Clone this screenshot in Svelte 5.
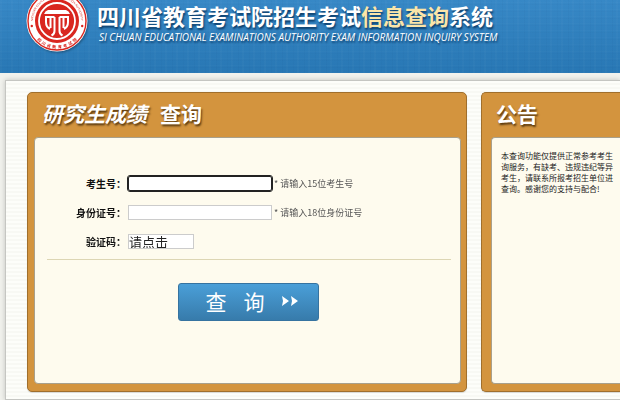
<script>
  let candidate = $state('');
  let idNumber = $state('');
  let captcha = $state('请点击');
  let first;
  $effect(() => first.focus());
</script>

<header>
  <svg class="logo" viewBox="0 0 64 64" role="img" aria-label="四川省教育考试院">
    <defs>
      <path id="arc-low" d="M4.500 32a27.500 27.500 0 0 0 55 0" />
      <path id="arc-top" d="M8 32a24 24 0 0 1 48 0" />
    </defs>
    <circle cx="32" cy="32" r="30.500" fill="#fff" />
    <circle cx="32" cy="32" r="29" fill="none" stroke="#d9261f" stroke-width="1.400" />
    <text class="seal-cn"><textPath href="#arc-low" startOffset="50%" text-anchor="middle">四&#160; 川&#160; 省&#160; 教&#160; 育&#160; 考&#160; 试&#160; 院</textPath></text>
    <text class="seal-en"><textPath href="#arc-top" startOffset="50%" text-anchor="middle">SICHUAN EDUCATIONAL EXAMINATION AUTHORITY</textPath></text>
    <circle cx="6.800" cy="37" r="1.200" fill="#d9261f" />
    <circle cx="57.200" cy="37" r="1.200" fill="#d9261f" />
    <circle cx="32" cy="32" r="22" fill="#d9261f" />
    <circle cx="32" cy="32" r="18" fill="none" stroke="#fff" stroke-width="1.800" />
    <path d="M23 21h18q3 1 4 4H19q1-3 4-4z" fill="#fff" />
    <path d="M20 28h9.500M34.500 28h9.500M21 28v5q0 5 4 7M25.500 28v11M29.500 28v14q0 3-3 4.500M34.500 28v14q0 3 3 4.500M38.500 28v11M43 28v5q0 5-4 7" fill="none" stroke="#fff" stroke-width="2" />
  </svg>
  <div class="brand">
    <h1>四川省教育考试院招生考试<em>信息查询</em>系统</h1>
    <p>SI CHUAN EDUCATIONAL EXAMINATIONS AUTHORITY EXAM INFORMATION INQUIRY SYSTEM</p>
  </div>
</header>

<main>
  <section class="panel query">
    <h2><i>研究生成绩</i><span>查询</span></h2>
    <form class="body" onsubmit={(e) => e.preventDefault()}>
      <div class="row">
        <label for="candidate">考生号：</label>
        <input id="candidate" bind:this={first} bind:value={candidate} />
        <small>* 请输入15位考生号</small>
      </div>
      <div class="row">
        <label for="idnum">身份证号：</label>
        <input id="idnum" bind:value={idNumber} />
        <small>* 请输入18位身份证号</small>
      </div>
      <div class="row">
        <label for="captcha">验证码：</label>
        <input id="captcha" class="short" bind:value={captcha} />
      </div>
      <hr />
      <button type="submit">
        <span>查</span><span>询</span>
        <svg viewBox="0 0 16 10" aria-hidden="true"><path d="M0 0l7 5-7 5 1-5zM9 0l7 5-7 5 1-5z" fill="#fff" /></svg>
      </button>
    </form>
  </section>
  <section class="panel notice">
    <h2>公告</h2>
    <div class="body">
      <p>本查询功能仅提供正常参考考生<br />询服务，有缺考、违规违纪等异<br />考生，请联系所报考招生单位进<br />查询。感谢您的支持与配合!</p>
    </div>
  </section>
</main>

<style>
  :global(body) {
    overflow: hidden;
    background: #f1f2ed;
    font-family: "Noto Sans", "Noto Sans CJK SC", sans-serif;
  }
  :global(*) { box-sizing: border-box; }
  h1, h2, p { margin: 0; }
  header {
    display: flex;
    align-items: flex-start;
    gap: 8px;
    height: 73px;
    padding-left: 25px;
    overflow: hidden;
    background:
      repeating-linear-gradient(90deg, #ffffff05 0 2px, transparent 2px 7px, #00205006 7px 8px, transparent 8px 11px),
      repeating-linear-gradient(0deg, #ffffff04 0 1px, transparent 1px 5px, #00205005 5px 6px, transparent 6px 7px),
      linear-gradient(#3788c6, #2877b4);
  }
  .logo {
    flex: none;
    width: 64px;
    height: 64px;
    margin-top: -11px;
    filter: drop-shadow(1px 1px 1px #0005);
  }
  .seal-cn { font: bold 4px "Noto Sans CJK SC", sans-serif; fill: #d9261f; }
  .seal-en { font: 3px "Liberation Sans", sans-serif; fill: #d9261f; }
  .brand { color: #fff; text-shadow: 1px 2px 2px #0b3d6a; white-space: nowrap; }
  h1 { font: bold 22px/30px "Noto Sans CJK SC", sans-serif; }
  h1 em { font-style: normal; color: #fbe5a9; }
  .brand p { padding-left: 2px; font: italic 10px/14px "Open Sans", "Noto Sans", sans-serif; }
  main {
    display: flex;
    gap: 14px;
    margin: 7px 0 0 5px;
    padding: 11px 0 7px 21px;
    border: 1px solid #c5c6c2;
    border-right: 0;
    background: repeating-linear-gradient(#fdfefa 0 2px, #f8f9f4 2px 4px);
    box-shadow: 0 0 5px #0003;
  }
  .panel {
    display: flex;
    flex-direction: column;
    border: 1px solid #a06f2c;
    border-radius: 5px;
    background: #d3943e;
    box-shadow: 0 1px 1px #0002;
  }
  .query { flex: none; width: 440px; padding: 0 5px 7px 6px; }
  .notice {
    flex: 1;
    min-width: 0;
    padding: 0 0 7px 9px;
    border-right: 0;
    border-radius: 5px 0 0 5px;
  }
  h2 {
    padding: 0 0 3px 8px;
    color: #fff;
    font: bold 21px/41px "Noto Sans CJK SC", sans-serif;
    text-shadow: 1px 2px 2px #5a3a10;
  }
  .notice h2 { padding-left: 5px; }
  h2 span { margin-left: 13px; }
  .body {
    flex: 1;
    min-height: 247px;
    border: 1px solid #a8a08c;
    border-radius: 4px;
    background: #fefbee;
  }
  .notice .body { border-right: 0; border-radius: 4px 0 0 4px; }
  form { padding: 38px 9px 0 12px; }
  .row { display: flex; align-items: center; height: 15px; margin-bottom: 14px; }
  label {
    width: 81px;
    padding-right: 2px;
    text-align: right;
    font: bold 10px/15px "Noto Sans CJK SC", sans-serif;
    color: #111;
  }
  input {
    width: 144px;
    height: 15px;
    padding: 0;
    border: 1px solid #ccc;
    border-radius: 0;
    background: #fff;
    color: #222;
    font: 13px/13px "Noto Sans CJK SC", sans-serif;
  }
  input:focus { outline: 1px solid #222; border-color: #222; border-radius: 2px; outline-offset: 0; }
  input.short { width: 66px; }
  small { padding-left: 2px; font: 9px/15px "Noto Sans CJK SC", sans-serif; color: #555; }
  hr { margin: -4px 0 0; border: 0; border-top: 1px solid #ddd6b4; }
  button {
    display: flex;
    align-items: center;
    justify-content: center;
    gap: 17px;
    width: 141px;
    height: 38px;
    margin: 23px 0 0 131px;
    padding: 0 0 2px 6px;
    border: 1px solid #3673a0;
    border-radius: 3px;
    background: linear-gradient(#4a9fd8, #377bab);
    color: #fff;
    font: 21px/34px "Noto Sans CJK SC", sans-serif;
  }
  button svg { width: 16px; height: 10px; }
  .notice p {
    padding: 12px 0 12px 9px;
    color: #222;
    font: 8px/11px "Noto Sans CJK SC", sans-serif;
    white-space: nowrap;
  }
</style>
